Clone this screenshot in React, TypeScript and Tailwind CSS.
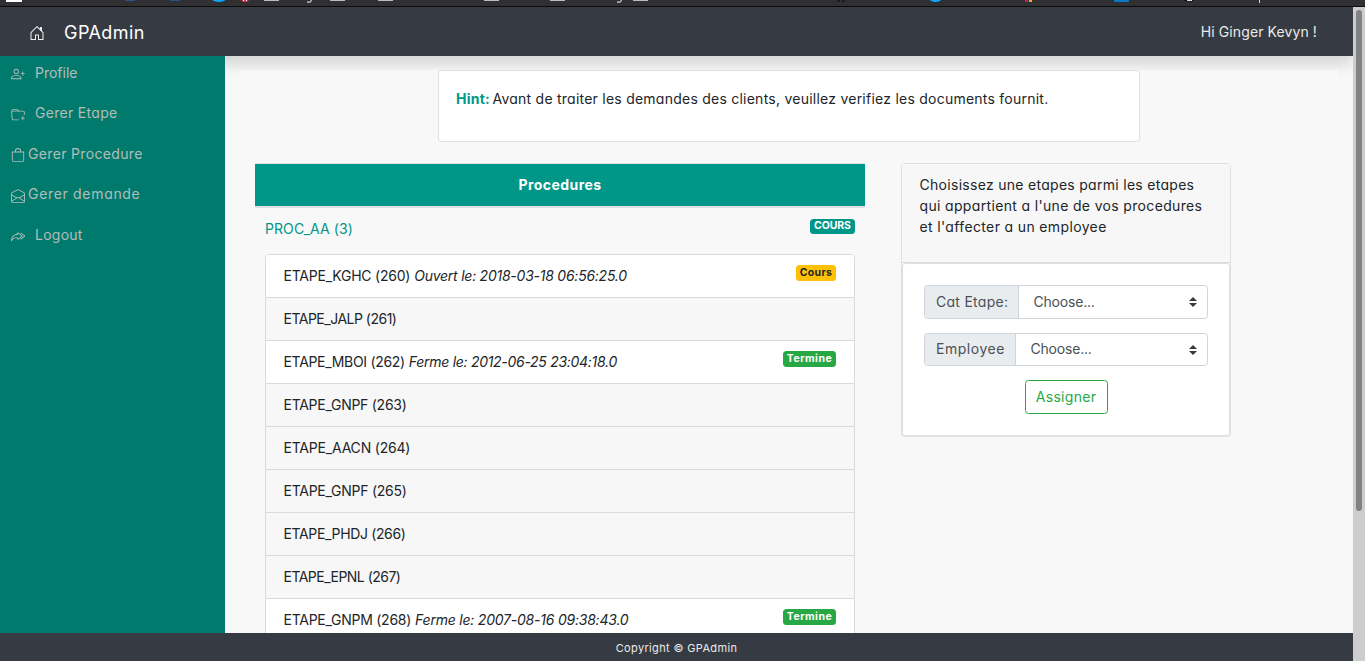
import type { ReactNode } from "react";
import {
  BsBag,
  BsEnvelopeOpen,
  BsFolderPlus,
  BsHouseDoor,
  BsPersonPlus,
  BsReplyAll,
} from "react-icons/bs";

type Step = {
  name: string;
  nameClass: string;
  date?: string;
  dateClass?: string;
  status?: "Cours" | "Termine";
};

const steps: Step[] = [
  { name: "ETAPE_KGHC (260)", nameClass: "tracking-[-0.23px]", date: "Ouvert le: 2018-03-18 06:56:25.0", dateClass: "tracking-[-0.24px]", status: "Cours" },
  { name: "ETAPE_JALP (261)", nameClass: "tracking-[-0.5px]" },
  { name: "ETAPE_MBOI (262)", nameClass: "tracking-[-0.31px]", date: "Ferme le: 2012-06-25 23:04:18.0", dateClass: "tracking-[-0.29px]", status: "Termine" },
  { name: "ETAPE_GNPF (263)", nameClass: "tracking-[-0.27px]" },
  { name: "ETAPE_AACN (264)", nameClass: "tracking-[-0.2px]" },
  { name: "ETAPE_GNPF (265)", nameClass: "tracking-[-0.26px]" },
  { name: "ETAPE_PHDJ (266)", nameClass: "tracking-[-0.35px]" },
  { name: "ETAPE_EPNL (267)", nameClass: "tracking-[-0.52px]" },
  { name: "ETAPE_GNPM (268)", nameClass: "tracking-[-0.26px]", date: "Ferme le: 2007-08-16 09:38:43.0", dateClass: "tracking-[-0.22px]", status: "Termine" },
];

const folderXs = [264, 330, 378, 484, 550, 633];

function BookmarkStrip() {
  return (
    <div className="h-[7px] shrink-0 border-b border-[#0c0c0c] bg-[#303032]">
      <svg width="1365" height="6" className="block">
        <rect x="6" y="0" width="16" height="2" fill="#fff" />
        <rect x="125" y="0" width="10" height="1" fill="#2d4f8e" />
        <rect x="170" y="0" width="10" height="1" fill="#2d4f8e" />
        <ellipse cx="219" cy="-1" rx="7" ry="3" fill="#0ea5ff" />
        <path d="M241 0h8l-2 2h-4z" fill="#d8334a" />
        <path d="M243 0h1v1h-1zM246 0h1v1h-1z" fill="#fff" />
        {folderXs.map((x) => (
          <rect key={x} x={x} y="0" width="15" height="1" fill="#b9bcbc" />
        ))}
        <path d="M307 2.2h2.5q1.2 0 2-2.2M617 2.2h2.5q1.2 0 2-2.2" stroke="#d5d5d5" strokeWidth="1.2" fill="none" />
        <path d="M837 0h3v2h-3zM842 0h3v2h-3z" fill="#1c1c1e" />
        <ellipse cx="930.5" cy="-1" rx="6" ry="3" fill="#0ea5ff" transform="translate(5 0)" />
        <path d="M1025 0h-1v0h1z" fill="#e8b22a" />
        <path d="M1017 0h3v2h-3z" fill="#e0125c" transform="translate(8 0)" />
        <path d="M1021 0h3v2h-3z" fill="#e8b22a" transform="translate(8 0)" />
        <rect x="1114" y="-2" width="15" height="4" rx="1" fill="#0a78c2" />
        <ellipse cx="1189" cy="-1" rx="5" ry="2.6" fill="#0c0c0c" />
        <rect x="1187" y="0" width="5" height="1" fill="#ddd" />
        <rect x="1259" y="0" width="1" height="3" fill="#ddd" />
      </svg>
    </div>
  );
}

function SideLink({ icon, label, className }: { icon: ReactNode; label: string; className: string }) {
  return (
    <a className="flex h-[40.5px] items-center text-[#b3bdbb]">
      <span className="mt-1 flex w-[14px] shrink-0 justify-center text-[14px]">{icon}</span>
      <span className={`whitespace-nowrap ${className}`}>{label}</span>
    </a>
  );
}

function Badge({ children, className }: { children: ReactNode; className: string }) {
  return (
    <span className={`flex items-center justify-center rounded-[3.5px] text-[10.5px] leading-none font-bold ${className}`}>
      {children}
    </span>
  );
}

function SelectRow({ label, labelClass, height }: { label: string; labelClass: string; height: string }) {
  return (
    <div className={`flex rounded-[3.5px] border border-[#ced4da] bg-white text-[#495057] ${height}`}>
      <span className={`flex items-center rounded-l-[2.5px] border-r border-[#ced4da] bg-[#e9ecef] pb-[2px] pl-[11px] ${labelClass}`}>
        {label}
      </span>
      <span className="flex flex-1 items-center justify-between pr-[10px] pl-[14.5px]">
        <span className="pb-[2px] tracking-[-0.2px]">Choose...</span>
        <svg width="8" height="10" viewBox="0 0 4 5" className="block">
          <path fill="#343a40" d="M2 0L0 2h4zm0 5L0 3h4z" />
        </svg>
      </span>
    </div>
  );
}

export default function App() {
  return (
    <div className="flex h-[661px] w-[1365px] flex-col overflow-hidden bg-[#f8f8f8] font-['Inter',sans-serif] text-[14px] leading-[21px] text-[#212529] [font-feature-settings:'cv11']">
      <BookmarkStrip />
      <div className="flex min-h-0 flex-1">
        <div className="flex min-w-0 flex-1 flex-col overflow-hidden">
          <nav className="z-10 flex h-[49px] shrink-0 items-center bg-[#363a42] pr-[36px] pl-[29px] text-white shadow-[0_8px_16px_rgba(0,0,0,0.15)]">
            <BsHouseDoor className="mt-[2px] text-[16px] text-[#f0f0f0]" />
            <span className="mt-px ml-[19px] text-[18px] tracking-[0.45px]">GPAdmin</span>
            <span className="ml-auto text-[#ebebeb] tracking-[0.1px]">Hi Ginger Kevyn !</span>
          </nav>

          <div className="flex min-h-0 flex-1">
            <aside className="z-20 w-[225px] shrink-0 bg-[#007a6c] pl-[11px]">
              <div className="-mt-[4px]">
                <SideLink icon={<BsPersonPlus />} label="Profile" className="pl-[10px] tracking-[0px]" />
                <SideLink icon={<BsFolderPlus />} label="Gerer Etape" className="pl-[10px] tracking-[0.3px]" />
                <SideLink icon={<BsBag />} label="Gerer Procedure" className="pl-[3px] tracking-[0.34px]" />
                <SideLink icon={<BsEnvelopeOpen />} label="Gerer demande" className="pl-[3px] tracking-[0.68px]" />
                <SideLink icon={<BsReplyAll className="-scale-x-100" />} label="Logout" className="pl-[10px] tracking-[0.25px]" />
              </div>
            </aside>

            <main className="min-w-0 flex-1 overflow-hidden pt-[14px] pr-[15px] pl-[15px]">
              <div className="relative z-20 h-full bg-[#f8f8f8] pl-[15px]">
                <section className="ml-[183px] h-[72px] w-[702px] rounded-[3.5px] border border-[#dfdfdf] bg-white pt-[17px] pl-[17px] whitespace-nowrap">
                  <b className="tracking-[0.24px] text-[#009688]">Hint:</b>
                  <span className="ml-[2.5px] tracking-[0.24px]">
                    Avant de traiter les demandes des clients, veuillez verifiez les documents fournit.
                  </span>
                </section>

                <div className="mt-[21px] flex items-start">
                  <section className="w-[610px]">
                    <h2 className="flex h-[45px] items-center justify-center border-t border-b-2 border-[#dee2e6] bg-[#009688] pb-[2px] font-bold tracking-[0.45px] text-white">
                      Procedures
                    </h2>
                    <div className="px-[10px] pt-[10px]">
                      <div className="flex h-[36px] items-start justify-between">
                        <a className="tracking-[0.08px] text-[#009688]">PROC_AA (3)</a>
                        <Badge className="mt-px h-[15px] w-[45px] bg-[#009688] tracking-[-0.1px] text-white">COURS</Badge>
                      </div>
                      <ul className="rounded-t-[3.5px] border border-[#dadada] bg-white">
                        {steps.map((s) => (
                          <li
                            key={s.name}
                            className={`flex h-[43px] items-start justify-between border-b border-[#dadada] pt-[10px] pr-[18px] pl-[17.5px] whitespace-nowrap first:rounded-t-[2.5px] ${s.status ? "bg-white" : "bg-[#f7f7f7]"}`}
                          >
                            <span>
                              <span className={s.nameClass}>{s.name}</span>
                              {s.date && <em className={`ml-[4px] ${s.dateClass}`}>{s.date}</em>}
                            </span>
                            {s.status === "Cours" && (
                              <Badge className="h-[16px] w-[40px] bg-[#ffc107] tracking-[0.3px]">Cours</Badge>
                            )}
                            {s.status === "Termine" && (
                              <Badge className="h-[16px] w-[53px] bg-[#28a745] tracking-[0.5px] text-white">Termine</Badge>
                            )}
                          </li>
                        ))}
                      </ul>
                    </div>
                  </section>

                  <section className="ml-[36px] w-[330px] rounded-[3.5px] border border-[#dfdfdf]">
                    <div className="h-[99px] border-b border-[#dadada] bg-[#f7f7f7] pt-[10px] pl-[17.5px] whitespace-nowrap">
                      <p className="tracking-[0.29px]">Choisissez une etapes parmi les etapes</p>
                      <p className="tracking-[0.34px]">qui appartient a l'une de vos procedures</p>
                      <p className="tracking-[0.36px]">et l'affecter a un employee</p>
                    </div>
                    <div className="flex h-[173px] flex-col rounded-[3.5px] border border-[#dfdfdf] bg-white px-[21px] pt-[21px]">
                      <SelectRow label="Cat Etape:" labelClass="w-[94px] tracking-[0.27px]" height="h-[34px]" />
                      <div className="h-[14px]" />
                      <SelectRow label="Employee" labelClass="w-[91px] tracking-[0.54px]" height="h-[33px]" />
                      <button className="mt-[14px] h-[34px] w-[83px] self-center rounded-[3.5px] border border-[#28a745] pb-[2px] tracking-[0.3px] text-[#28a745]">
                        Assigner
                      </button>
                    </div>
                  </section>
                </div>
              </div>
            </main>
          </div>

          <footer className="z-30 flex h-[28px] shrink-0 items-center justify-center bg-[#363a42] pt-[2px] text-[11px] tracking-[0.35px] text-[#ebebeb]">
            Copyright © GPAdmin
          </footer>
        </div>

        <div className="w-[12px] shrink-0 bg-[#cdcdcd] pt-[3px] pl-[3px]">
          <div className="h-[501px] w-[6px] rounded-full bg-[#7f8483]" />
        </div>
      </div>
    </div>
  );
}
